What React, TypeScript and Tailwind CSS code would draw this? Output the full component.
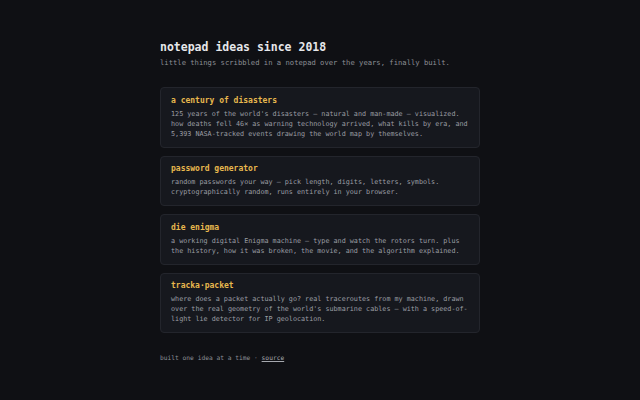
const ideas = [
  {
    title: "a century of disasters",
    body: "125 years of the world's disasters — natural and man-made — visualized. how deaths fell 46× as warning technology arrived, what kills by era, and 5,393 NASA-tracked events drawing the world map by themselves.",
  },
  {
    title: "password generator",
    body: "random passwords your way — pick length, digits, letters, symbols. cryptographically random, runs entirely in your browser.",
  },
  {
    title: "die enigma",
    body: "a working digital Enigma machine — type and watch the rotors turn. plus the history, how it was broken, the movie, and the algorithm explained.",
  },
  {
    title: "tracka·packet",
    body: "where does a packet actually go? real traceroutes from my machine, drawn over the real geometry of the world's submarine cables — with a speed-of-light lie detector for IP geolocation.",
  },
];

const App = () => {
  return (
    <div className="min-h-screen bg-[#0f1014] font-['DejaVu_Sans_Mono',monospace]">
      <div className="mx-auto w-[320px] pt-[40px] pb-8">
        <h1 className="text-[11.5px] leading-[14px] font-bold text-[#e6e7ea]">
          notepad ideas since 2018
        </h1>
        <p className="mt-[4px] text-[7.2px] leading-[10px] text-[#8c8f95]">
          little things scribbled in a notepad over the years, finally built.
        </p>

        <div className="mt-[19px] flex flex-col gap-2">
          {ideas.map((idea) => (
            <div
              key={idea.title}
              className="rounded-[4px] border border-[#23252c] bg-[#16181e] px-[10px] pt-[7.5px] pb-[8px]"
            >
              <h2 className="text-[8px] leading-[10px] font-bold text-[#e8b84e]">
                {idea.title}
              </h2>
              <p className="mt-[3px] text-[6.75px] leading-[10px] text-[#9b9ea4]">
                {idea.body}
              </p>
            </div>
          ))}
        </div>

        <p className="mt-[20px] text-[6.25px] leading-[10px] text-[#8c8f95]">
          built one idea at a time ·{" "}
          <a href="#" className="text-[#a5a8ae] underline">
            source
          </a>
        </p>
      </div>
    </div>
  );
};

export default App;
